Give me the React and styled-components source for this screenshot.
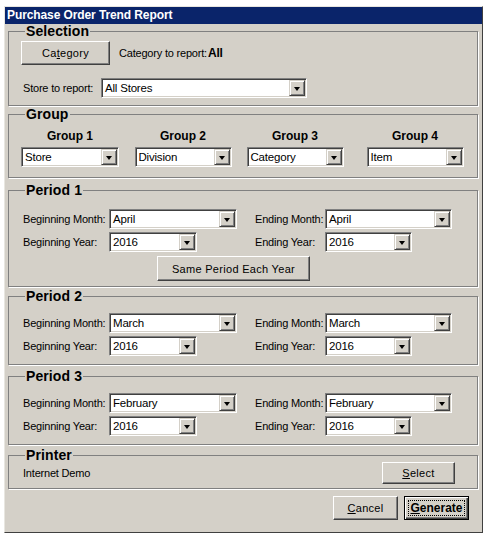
import styled, { createGlobalStyle } from "styled-components";

const GlobalStyle = createGlobalStyle`
  html, body {
    margin: 0;
    padding: 0;
    background: #ffffff;
  }
  body {
    font-family: "Liberation Sans", Arial, sans-serif;
    font-size: 11px;
    color: #000;
  }
`;

const Window = styled.div`
  margin: 6px 0 0 4px;
  width: 479px;
  box-sizing: border-box;
  background: #d4d0c8;
  border-left: 1px solid #e8e6e0;
  border-top: 1px solid #e8e6e0;
  border-right: 1px solid #404040;
  border-bottom: 1px solid #404040;
`;

const TitleBar = styled.div`
  height: 17px;
  background: #0a246a;
  color: #fff;
  font-weight: bold;
  font-size: 12px;
  line-height: 17px;
  padding-left: 2px;
  letter-spacing: -0.1px;
`;

const Body = styled.div`
  padding: 0 4px 12px 3px;
  display: flex;
  flex-direction: column;
`;

const GroupBox = styled.fieldset`
  margin: ${(p) => p.$mt || 0}px 0 0 0;
  height: ${(p) => p.$h}px;
  box-sizing: border-box;
  border: 1px solid #808080;
  box-shadow: 1px 1px 0 #fff;
  padding: ${(p) => p.$pt || 0}px 12px 0 12px;
  min-width: 0;
`;

const Legend = styled.legend`
  font-size: 14px;
  font-weight: bold;
  line-height: 12px;
  padding: 0 1px;
  margin-left: 4px;
  letter-spacing: 0.1px;
`;

const Row = styled.div`
  display: flex;
  align-items: center;
  justify-content: ${(p) => p.$justify || "flex-start"};
  gap: ${(p) => p.$gap || 0}px;
  margin-top: ${(p) => p.$mt || 0}px;
  padding-right: ${(p) => p.$pr || 0}px;
`;

const Label = styled.span`
  margin-left: ${(p) => p.$ml || 0}px;
  width: ${(p) => (p.$w ? `${p.$w}px` : "auto")};
  letter-spacing: -0.2px;
  white-space: nowrap;
`;

const Strong = styled.span`
  font-weight: bold;
  font-size: 12px;
  margin-left: 1px;
`;

const Button = styled.button`
  width: ${(p) => p.$w}px;
  height: ${(p) => p.$h || 24}px;
  margin-left: ${(p) => p.$ml || 0}px;
  box-sizing: border-box;
  background: #d4d0c8;
  font-family: "Liberation Sans", Arial, sans-serif;
  font-size: 11px;
  letter-spacing: 0.3px;
  color: #000;
  padding: 0;
  border: 1px solid;
  border-color: #fff #404040 #404040 #fff;
  box-shadow: inset -1px -1px 0 #808080;
  flex-shrink: 0;
`;

const DefaultButton = styled(Button)`
  border: 1px solid #000;
  box-shadow: inset 1px 1px 0 #fff, inset -1px -1px 0 #404040,
    inset -2px -2px 0 #808080;
  font-weight: bold;
  font-size: 12px;
  letter-spacing: 0;
  padding: 3px;
`;

const Focus = styled.span`
  display: flex;
  align-items: center;
  justify-content: center;
  height: 100%;
  box-sizing: border-box;
  border: 1px dotted #000;
`;

const Combo = styled.div`
  width: ${(p) => p.$w}px;
  height: 20px;
  box-sizing: border-box;
  display: flex;
  background: #fff;
  border: 1px solid;
  border-color: #808080 #fff #fff #808080;
  box-shadow: inset 1px 1px 0 #404040, inset -1px -1px 0 #d4d0c8;
  padding: 1px;
  flex-shrink: 0;
`;

const ComboText = styled.div`
  flex: 1;
  line-height: 16px;
  padding-left: 2px;
  font-size: 11.5px;
  letter-spacing: -0.2px;
  white-space: nowrap;
  overflow: hidden;
`;

const DropButton = styled.div`
  width: 16px;
  height: 16px;
  box-sizing: border-box;
  background: #d4d0c8;
  border: 1px solid;
  border-color: #d4d0c8 #404040 #404040 #d4d0c8;
  box-shadow: inset 1px 1px 0 #fff, inset -1px -1px 0 #808080;
  display: flex;
  align-items: center;
  justify-content: center;

  &::after {
    content: "";
    border-left: 3.5px solid transparent;
    border-right: 3.5px solid transparent;
    border-top: 4px solid #000;
    margin-top: 1px;
  }
`;

const GroupGrid = styled.div`
  display: grid;
  grid-template-columns: 113px 112px 120px 98px;
`;

const GroupCol = styled.div`
  display: flex;
  flex-direction: column;
  align-items: center;
  width: 98px;
  gap: 4px;
`;

const ColTitle = styled.div`
  font-weight: bold;
  font-size: 12px;
  line-height: 14px;
`;

const PeriodGrid = styled.div`
  display: grid;
  grid-template-columns: 88px 146px 70px auto;
  row-gap: 3px;
  align-items: center;
`;

const Footer = styled.div`
  display: flex;
  justify-content: flex-end;
  gap: 6px;
  margin-top: 7px;
  padding-right: 9px;
`;

const u = (s, i) => (
  <>
    {s.slice(0, i)}
    <u>{s[i]}</u>
    {s.slice(i + 1)}
  </>
);

const Select = ({ w, value }) => (
  <Combo $w={w}>
    <ComboText>{value}</ComboText>
    <DropButton />
  </Combo>
);

const Period = ({ title, begin, end, mt, h, pt, children }) => (
  <GroupBox $mt={mt} $h={h} $pt={pt}>
    <Legend>{title}</Legend>
    <PeriodGrid>
      <Label $ml={2}>Beginning Month:</Label>
      <Select w={128} value={begin} />
      <Label>Ending Month:</Label>
      <Select w={127} value={end} />
      <Label $ml={2}>Beginning Year:</Label>
      <Select w={88} value="2016" />
      <Label>Ending Year:</Label>
      <Select w={87} value="2016" />
    </PeriodGrid>
    {children}
  </GroupBox>
);

const groups = [
  ["Group 1", "Store"],
  ["Group 2", "Division"],
  ["Group 3", "Category"],
  ["Group 4", "Item"],
];

export default function App() {
  return (
    <>
      <GlobalStyle />
      <Window>
        <TitleBar>Purchase Order Trend Report</TitleBar>
        <Body>
          <GroupBox $mt={1} $h={81} $pt={4}>
            <Legend>Selection</Legend>
            <Row $gap={9}>
              <Button $w={89}>{u("Category", 2)}</Button>
              <Label>
                Category to report:<Strong>All</Strong>
              </Label>
            </Row>
            <Row $mt={13}>
              <Label $ml={2} $w={78}>
                Store to report:
              </Label>
              <Select w={206} value="All Stores" />
            </Row>
          </GroupBox>

          <GroupBox $mt={2} $h={70} $pt={9}>
            <Legend>Group</Legend>
            <GroupGrid>
              {groups.map(([t, v]) => (
                <GroupCol key={t}>
                  <ColTitle>{t}</ColTitle>
                  <Select w={t === "Group 1" ? 98 : 97} value={v} />
                </GroupCol>
              ))}
            </GroupGrid>
          </GroupBox>

          <Period title="Period 1" begin="April" end="April" mt={6} h={103} pt={13}>
            <Row $mt={4}>
              <Button $w={153} $h={25} $ml={136}>
                Same Period Each Year
              </Button>
            </Row>
          </Period>
          <Period title="Period 2" begin="March" end="March" mt={3} h={75} pt={11} />
          <Period title="Period 3" begin="February" end="February" mt={5} h={75} pt={11} />

          <GroupBox $mt={4} $h={40} $pt={0}>
            <Legend>Printer</Legend>
            <Row $justify="space-between" $mt={1} $pr={10}>
              <Label $ml={2}>Internet Demo</Label>
              <Button $w={73} $h={22}>
                {u("Select", 0)}
              </Button>
            </Row>
          </GroupBox>

          <Footer>
            <Button $w={65}>{u("Cancel", 0)}</Button>
            <DefaultButton $w={65}>
              <Focus>{u("Generate", 0)}</Focus>
            </DefaultButton>
          </Footer>
        </Body>
      </Window>
    </>
  );
}
